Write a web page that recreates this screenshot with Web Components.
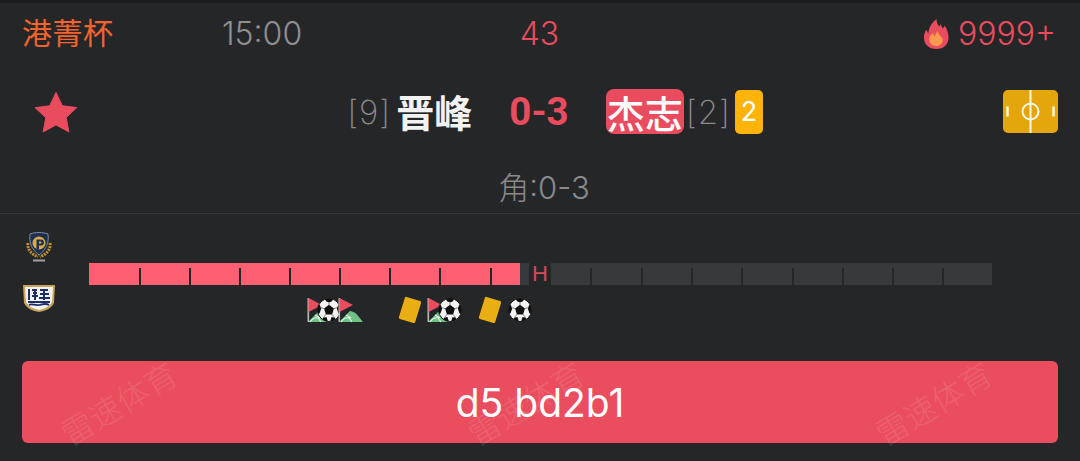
<!doctype html>
<html lang="zh"><head><meta charset="utf-8"><title>比赛</title>
<style>
html,body{margin:0;height:100%;background:#252628}
body{font-family:Inter,"Noto Sans CJK SC",sans-serif;overflow:hidden}
</style></head><body>
<match-card></match-card>
<template id="ball"><svg viewBox="0 0 24 24" width="24" height="24"><defs><clipPath id="bc"><circle cx="12" cy="12" r="11.500"/></clipPath></defs><circle cx="12" cy="12" r="11.500" fill="#f4f4f4"/><g clip-path="url(#bc)"><path d="M12 6.800l5 3.700-1.900 5.900H8.900L7 10.500z" fill="#111"/><path d="M7.500 0h9l-1.500 3.200-3 1.300-3-1.300zM24 7v9.500l-2.600-1.200-1.600-4.700 1.500-3.800zM0 7v9.500l2.600-1.200 1.600-4.700L2.700 6.800zM5 24l1-4.200 3.500-.7 1.500 4.900zM19 24l-1-4.200-3.500-.7-1.500 4.900z" fill="#111"/><path d="M12 4.500v3M16.600 10.800l3.200-1.200M14.800 16.200l3 3.600M9.200 16.200l-3 3.600M7.400 10.800L4.200 9.600" stroke="#666" stroke-width=".8"/></g><circle cx="12" cy="12" r="11.500" fill="none" stroke="#111" stroke-width="1"/></svg></template>
<template id="flag"><svg viewBox="0 0 26 26" width="26" height="26"><path d="M1 25l11-11c3 .5 5 1.500 6.500 3l6.500 8z" fill="#6fc286"/><path d="M3 25c2-3 5-5 8-4l3 4M8 18l5 3" fill="none" stroke="#e8f5ea" stroke-width="1.100"/><path d="M1.300 1v24" stroke="#b8b8b8" stroke-width="1.600"/><path d="M1.500 1l13.500 7L1.500 15z" fill="#ea4d5e"/></svg></template>
<template id="card"><svg viewBox="0 0 26 28" width="26" height="28"><rect x="4.500" y="2.500" width="17" height="23" rx="1.500" fill="#e9ae13" transform="rotate(17 13 14)"/></svg></template>
<script>
const def = (name, html) => customElements.define(name, class extends HTMLElement {
  constructor(){ super(); this.attachShadow({mode:'open'}).innerHTML = typeof html==='function'?html(this):html; }
});
const tpl = id => document.getElementById(id).innerHTML;

def('info-row', `<style>
:host{display:flex;align-items:center;height:62px;padding:0 24px 0 23px;font-size:32px;line-height:36px;box-sizing:border-box}
.lg{width:199px;color:#f2632f;font-size:30px;letter-spacing:.5px;flex:none;margin-bottom:2px;margin-left:-1px;margin-right:1px}
.t{width:278px;flex:none;color:#8f8f8f;font-weight:300}
.m{width:80px;text-align:center;flex:none;color:#e94c5e;font-weight:300;padding-right:1px;box-sizing:border-box}
.h{flex:1;display:flex;justify-content:flex-end;align-items:center;gap:8px;color:#e94c5e;font-weight:300}
svg{display:block}
</style>
<div class="lg">港菁杯</div><div class="t">15:00</div><div class="m">43</div>
<div class="h"><svg viewBox="0 0 28 33" width="27" height="32"><path d="M14 32C6 32 1 27 1 20c0-3 1-6 2.500-8l2 4C6 10 9 5 14 1c0 4 1.500 6 3 8l1-3c1 2 2 3 2.500 5l2-3c2 3 4 7 4 12 0 7-5 12-12.500 12z" fill="#e94c5e"/><path d="M14 29c-4.500 0-7.500-3-7.500-7 0-3 2-5 4-6.500 0 2 1 3 2 3.500 0-2 1-3.500 3-5 0 2 1 3 2.500 4.500 1.500 1.500 2.500 2.500 2.500 4 0 4-3 6.500-6.500 6.500z" fill="#fb9a4f"/></svg><span>9999+</span></div>`);

def('score-row', `<style>
:host{display:grid;grid-template-columns:1fr auto 1fr;align-items:center;height:93px;padding:0 23px 0 21px;box-sizing:border-box}
.l,.r{display:flex;align-items:center;height:46px}
.star{margin-left:13px;display:block}
.sp{flex:1}
.rank{font-size:33px;font-weight:200;color:#8a8a8a;line-height:40px;letter-spacing:1px}
.n{font-size:38px;font-weight:700;color:#f2f2f2;line-height:46px;font-family:"Noto Sans CJK SC",sans-serif;margin-top:-2px}
.s{font-size:38.500px;font-weight:700;color:#e94c5e;margin:0 37px;font-family:Roboto,Inter,sans-serif;line-height:46px}
.b{background:#e94c5e;border-radius:8px;width:78px;height:45px;display:flex;align-items:center;justify-content:center;white-space:nowrap;font-weight:500;color:#fff;margin:0}
.c{width:28px;height:44px;background:#fdb407;border-radius:5px;color:#fff;font-size:27px;display:flex;align-items:center;justify-content:center;margin-left:4px;font-weight:400}
.l .rank{margin-right:5px}.r .rank{margin-left:2px}
.p{display:block;margin-right:-1px}
</style>
<div class="l"><svg class="star" viewBox="0 0 44 42" width="44" height="42"><path d="M22 1.500l6.300 13.200 14.500 1.900-10.600 10 2.700 14.300L22 33.900 9.100 41l2.700-14.300-10.600-10 14.500-1.900z" fill="#e94c5e" stroke="#e94c5e" stroke-linejoin="round"/></svg><div class="sp"></div><span class="rank">[9]</span><span class="n">晋峰</span></div>
<div class="s">0-3</div>
<div class="r"><span class="n b">杰志</span><span class="rank">[2]</span><span class="c">2</span><div class="sp"></div><svg class="p" viewBox="0 0 55 43" width="55" height="43"><rect width="55" height="43" rx="5" fill="#e4a60d"/><g fill="none" stroke="#fff" stroke-width="2" opacity=".92"><path d="M27.500 0v43"/><circle cx="27.500" cy="21.500" r="8"/><path d="M4.500 16.500v10M50.500 16.500v10" stroke-width="2.400"/></g></svg></div>`);

def('corner-row', `<style>
:host{display:block;height:50px;padding:5px 0 0 8px;text-align:center;color:#8a8a8a;font-size:31px;font-weight:300;line-height:50px;border-bottom:1px solid #36373a}
</style><span>角:0-3</span>`);

const seg = (w,c) => `<span style="width:${w}px;background:${c}"></span>`;
const tick = c => `<i style="background:linear-gradient(${c} 5px,#252628 5px)"></i>`;
const run = (ws,c) => ws.map(w=>seg(w,c)).join(tick(c));

def('match-timeline', () => `<style>
:host{display:flex;height:147px;box-sizing:border-box;padding:18px 0 0 22px}
.logos{width:67px;flex:none;display:flex;flex-direction:column;align-items:flex-start}
.logos svg{display:block}
.a{margin-left:4px}.b{margin-top:22px}
.track{flex:none;width:903px;padding-top:31px}
.bar{display:flex;height:22px;align-items:stretch}
.bar span{display:block;flex:none}
.bar i{display:block;width:2px;flex:none}
.h{width:22px;flex:none;color:#d64a5c;font-size:22px;line-height:22px;text-align:center;background:#252628;font-family:"Liberation Sans",sans-serif}
.ev{position:relative;height:28px;margin-top:12px}
.ev div{position:absolute;top:0;display:block}
.ev div svg{display:block}
</style>
<div class="logos">
<svg class="a" viewBox="0 0 26 30" width="26" height="30"><path d="M2 11c-1 7 4 11 10 14M24 11c1 7-4 11-10 14" fill="none" stroke="#c2932f" stroke-width="3" stroke-dasharray="2 1"/><path d="M4 2c5-2 13-2 18 0 1 8-1 15-9 21C5 17 3 10 4 2z" fill="#1c3050" stroke="#7c8aa8"/><circle cx="13" cy="11" r="6.500" fill="#dcab4c"/><path d="M10.500 7.500h4.500a3 3 0 0 1 0 6h-2v4h-2.500z" fill="#1c3050"/><path d="M13 9.500h1.500a1 1 0 0 1 0 2H13z" fill="#dcab4c"/><rect x="7" y="27.500" width="12" height="2" fill="#a0a0a0"/></svg>
<svg class="b" viewBox="0 0 34 29" width="34" height="29"><path d="M1 1h32l-1 18c-3 6-9 8-15 9C11 27 5 25 2 19z" fill="#c7a45a"/><path d="M3 3h28l-1 15c-3 5-8 7-13 8C12 25 7 23 4 18z" fill="#f3f3f6"/><path d="M6 5h2v11H6zM10 5h5v2h-5zM11 8h4v2h-4zM10 11h6v2h-6zM18 5h8v2h-8zM18 9h9v2h-9zM17 13h11v2H17zM21 5h2v11h-2zM12 6h2v10h-2zM6 17h22v2H6z" fill="#1d2f66"/><path d="M7 21c3-2 6 1 10 0s7-2 10 0" fill="none" stroke="#1d2f66" stroke-width="1.800"/></svg>
</div>
<div class="track">
<div class="bar">${run([50,48,48,48,48,48,48,49,28],'#fe6073')}${seg(9,'#38393b')}<div class="h">H</div>${run([39,49,48,48,49,48,48,48,48],'#38393b')}</div>
<div class="ev">
<div style="left:218px">${tpl('flag')}</div>
<div style="left:228px;top:1px">${tpl('ball')}</div>
<div style="left:249px">${tpl('flag')}</div>
<div style="left:308px;top:-1px">${tpl('card')}</div>
<div style="left:338px">${tpl('flag')}</div>
<div style="left:349px;top:1px">${tpl('ball')}</div>
<div style="left:388px;top:-1px">${tpl('card')}</div>
<div style="left:418.500px;top:1px">${tpl('ball')}</div>
</div>
</div>`);

def('event-button', `<style>
:host{display:flex;align-items:center;justify-content:center;position:relative;height:82px;margin:0 22px;background:#ea4d5e;border-radius:6px;color:#fff;font-size:39px;font-weight:400;font-family:Inter,sans-serif}
.w{position:absolute;top:19px;color:#fff;opacity:.1;font-size:32px;line-height:44px;width:140px;text-align:center;transform:rotate(-31deg);font-family:"Noto Sans CJK SC",sans-serif;font-weight:300;white-space:nowrap}
</style>
<span class="w" style="left:26px">雷速体育</span><span class="w" style="left:433px">雷速体育</span><span class="w" style="left:841px">雷速体育</span>
<span style="position:relative"><slot></slot></span>`);

def('match-card', `<style>
:host{display:block;width:1080px;height:461px;background:#252628;overflow:hidden}
.top{height:3px;background:#1c1d1f}
</style>
<div class="top"></div>
<info-row></info-row>
<score-row></score-row>
<corner-row></corner-row>
<match-timeline></match-timeline>
<event-button>d5 bd2b1</event-button>`);
</script>
</body></html>
